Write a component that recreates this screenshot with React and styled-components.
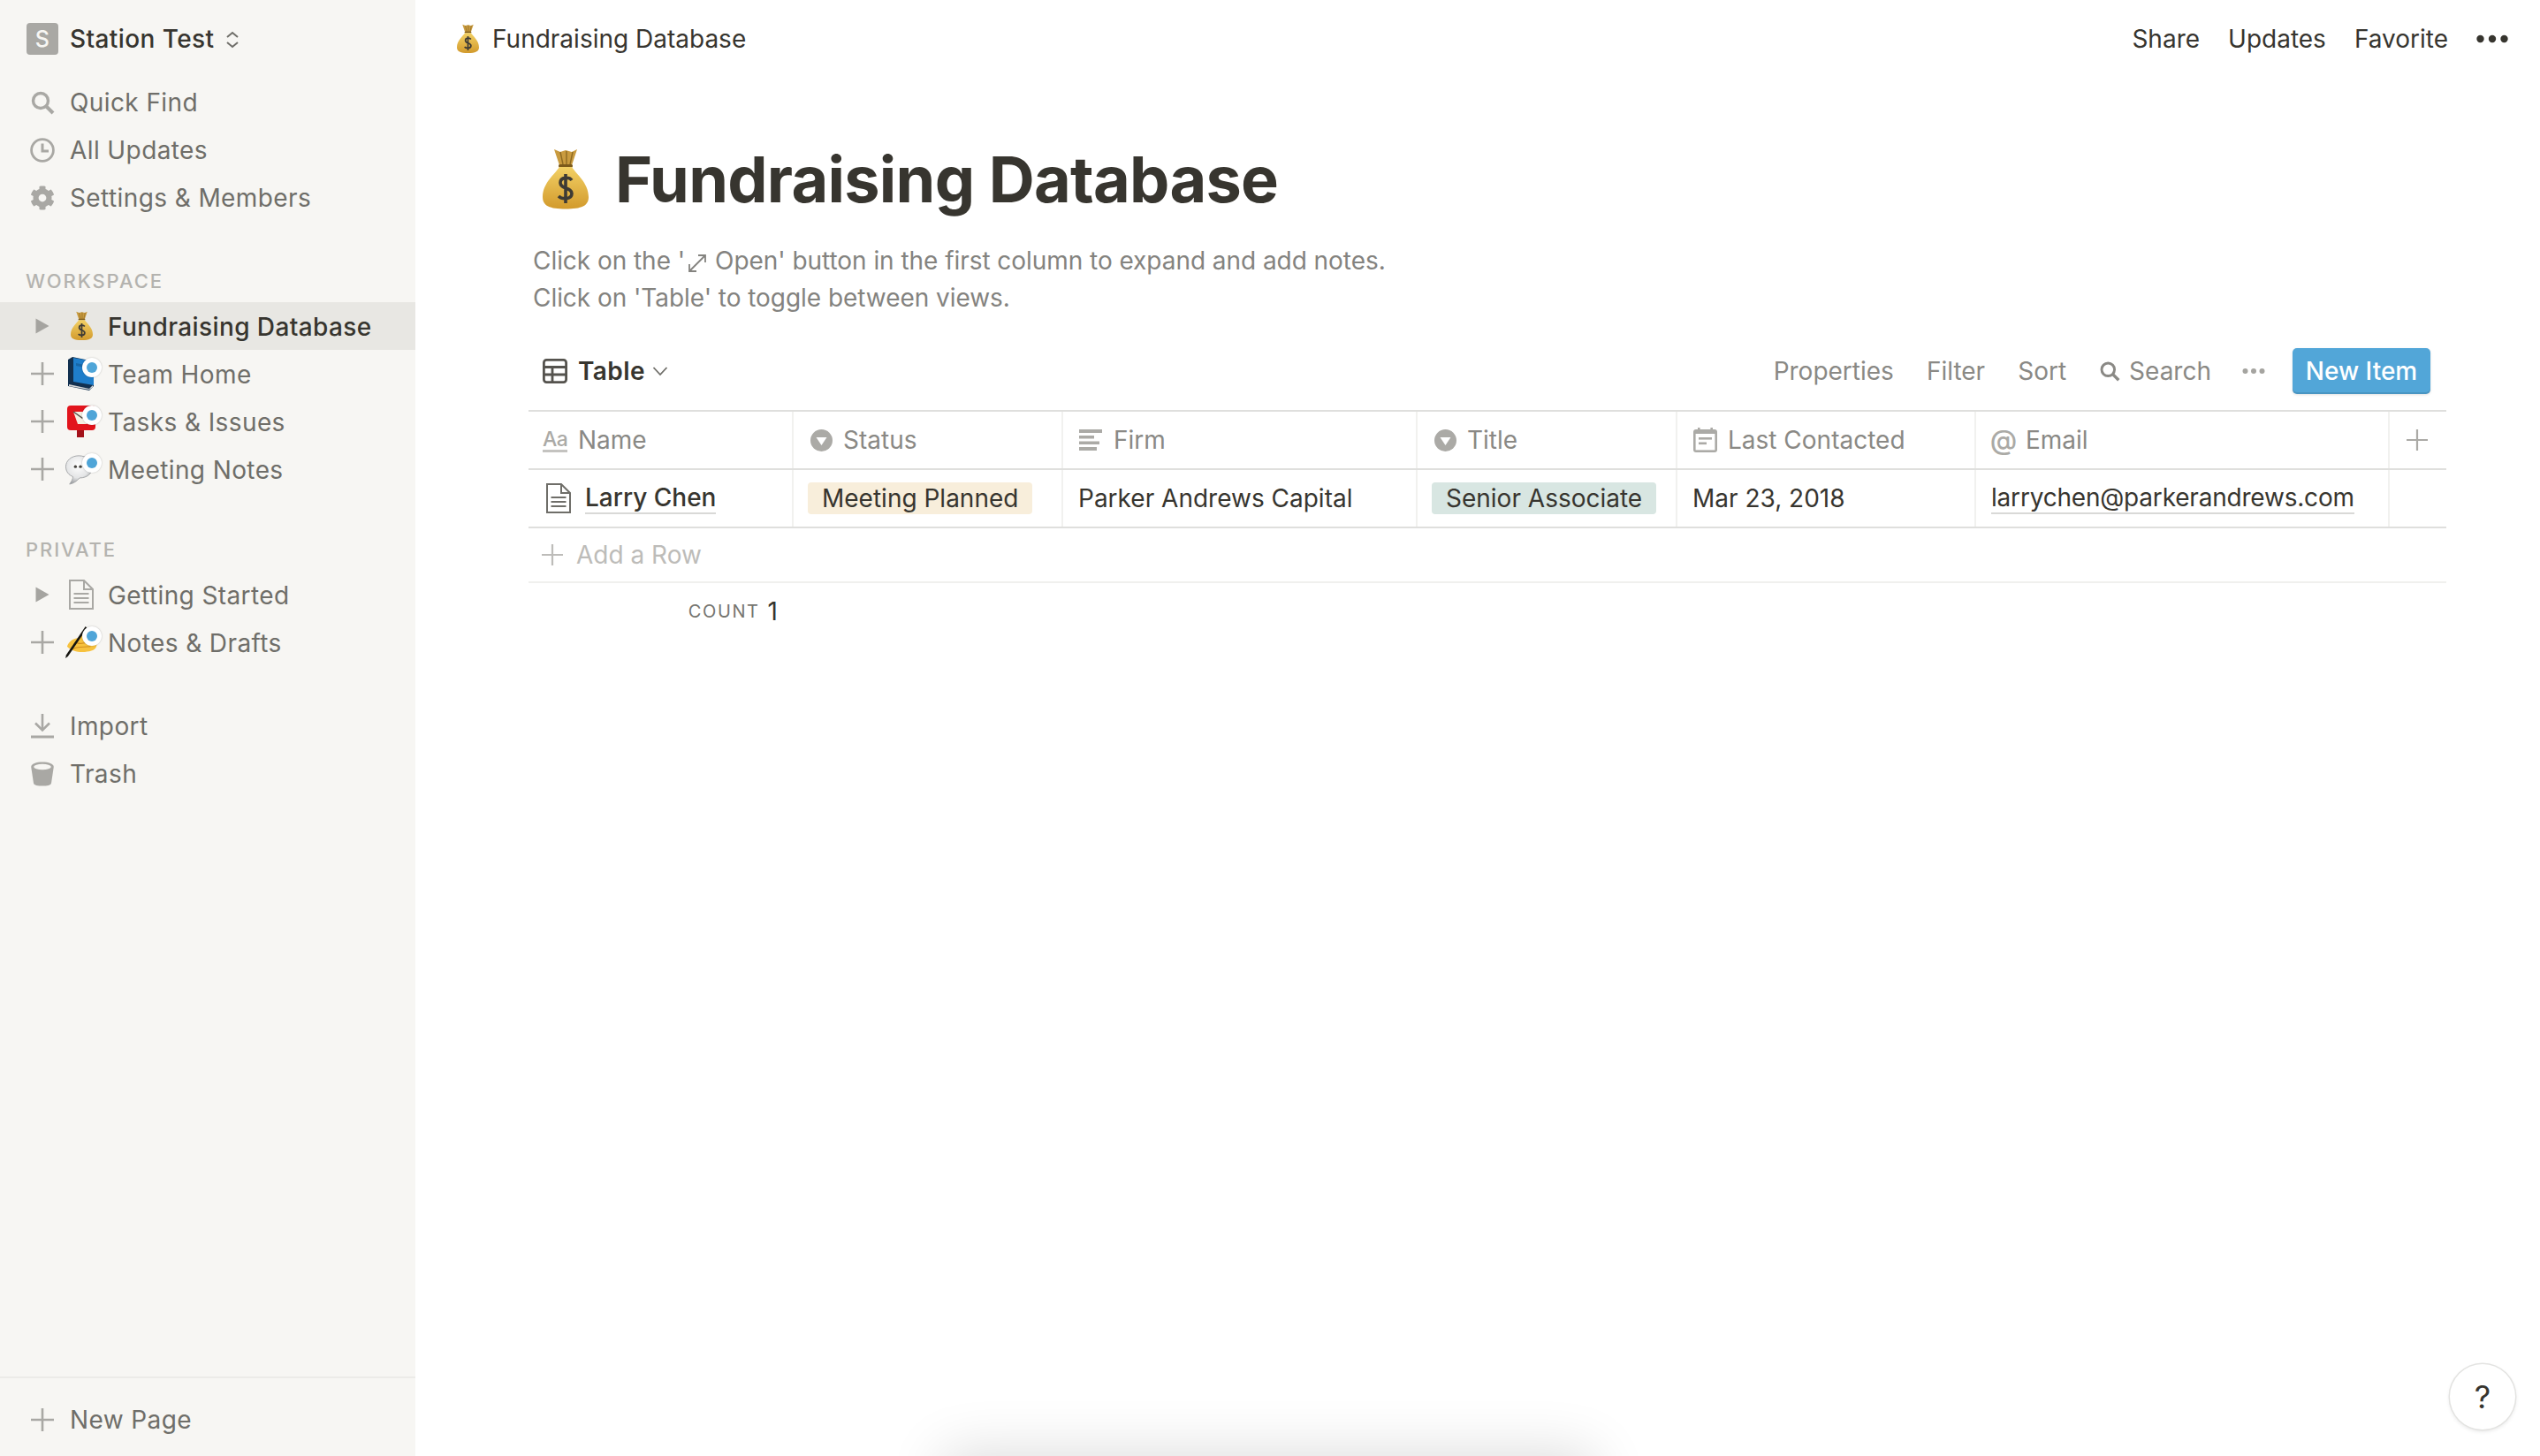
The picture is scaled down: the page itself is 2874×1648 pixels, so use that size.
import React from "react";
import styled, { createGlobalStyle } from "styled-components";
import { FaCog } from "react-icons/fa";

const GlobalStyle = createGlobalStyle`
  html, body {
    margin: 0;
    padding: 0;
    background: #fff;
  }
  body {
    font-family: "Inter", "Liberation Sans", sans-serif;
    color: #37352f;
    -webkit-font-smoothing: antialiased;
  }
  * { box-sizing: border-box; }
`;

const Page = styled.div`
  position: relative;
  display: flex;
  width: 100vw;
  height: 100vh;
  overflow: hidden;
`;

/* sidebar */

const Sidebar = styled.aside`
  display: flex;
  flex-direction: column;
  flex: 0 0 470px;
  background: #f7f6f3;
`;

const Workspace = styled.div`
  display: flex;
  align-items: center;
  height: 88px;
  padding-left: 30px;
  font-size: 28px;
  font-weight: 500;
  letter-spacing: 0.4px;
  color: #37352f;
`;

const Avatar = styled.span`
  display: flex;
  align-items: center;
  justify-content: center;
  width: 36px;
  height: 36px;
  margin-right: 13px;
  border-radius: 4px;
  background: #a9a8a4;
  color: #f7f6f3;
  font-size: 25px;
  font-weight: 500;
`;

const Updown = styled.svg`
  width: 16px;
  height: 20px;
  margin-left: 13px;
  margin-top: 2px;
`;

const NavGroup = styled.nav`
  display: flex;
  flex-direction: column;
  margin-top: ${(p) => p.$top || 0}px;
`;

const Row = styled.div`
  display: flex;
  align-items: center;
  height: 54px;
  padding-left: 30px;
  font-size: 28px;
  letter-spacing: 0.4px;
  font-weight: ${(p) => (p.$active ? 500 : 400)};
  color: ${(p) => (p.$active ? "#37352f" : "#6f6e69")};
  background: ${(p) => (p.$active ? "#e8e7e3" : "transparent")};
`;

const RowLabel = styled.span`
  padding-top: 2px;
`;

const Slot = styled.span`
  position: relative;
  display: flex;
  align-items: center;
  justify-content: center;
  flex: 0 0 36px;
  width: 36px;
  min-width: 0;
  height: 36px;
  margin-right: ${(p) => (p.$second ? 12 : 13)}px;
  margin-left: ${(p) => (p.$second ? -5 : 0)}px;
  padding-top: ${(p) => (p.$nudge ? 2 : 0)}px;
  color: #a9a8a4;
`;

const Badge = styled.span`
  position: absolute;
  top: 0;
  right: -5px;
  width: 22px;
  height: 22px;
  border-radius: 50%;
  background: #fff;
  box-shadow: 0 0 2px rgba(0, 0, 0, 0.25);

  &::after {
    content: "";
    position: absolute;
    top: 5px;
    left: 5px;
    width: 12px;
    height: 12px;
    border-radius: 50%;
    background: #4fa5d8;
  }
`;

const SectionLabel = styled.div`
  height: 30px;
  margin: ${(p) => p.$top}px 0 9px;
  padding-left: 29px;
  font-size: 22px;
  line-height: 30px;
  font-weight: 500;
  letter-spacing: 1.9px;
  color: #b4b3af;
`;

const SidebarFooter = styled.div`
  margin-top: auto;
  height: 90px;
  padding-top: 19px;
  border-top: 2px solid #ecebe8;
`;

/* main */

const Main = styled.main`
  display: flex;
  flex-direction: column;
  flex: 1;
  min-width: 0;
`;

const Topbar = styled.header`
  display: flex;
  align-items: center;
  height: 88px;
  padding: 0 36px 0 47px;
  font-size: 28px;
  color: #37352f;
`;

const Crumb = styled.div`
  display: flex;
  align-items: center;
  gap: 15px;
`;

const TopActions = styled.div`
  display: flex;
  align-items: center;
  gap: 32px;
  margin-left: auto;
`;

const Dots = styled.svg`
  display: block;
  width: ${(p) => p.width}px;
  height: ${(p) => p.height}px;
`;

const Content = styled.div`
  display: flex;
  flex-direction: column;
  margin: 0 106px 0 128px;
`;

const TitleRow = styled.div`
  display: flex;
  align-items: center;
  gap: 30px;
  height: 90px;
  margin: 70px 0 0 16px;
`;

const Title = styled.h1`
  margin: 0;
  font-size: 72px;
  line-height: 90px;
  font-weight: 700;
  letter-spacing: -0.75px;
  color: #37352f;
`;

const Description = styled.div`
  margin: 26px 0 0 5px;
  font-size: 28px;
  line-height: 42px;
  letter-spacing: -0.05px;
  color: #84837f;

  svg {
    display: inline-block;
    width: 24px;
    height: 24px;
    vertical-align: -5px;
    margin: 0 8px 0 2px;
  }
`;

const Toolbar = styled.div`
  display: flex;
  align-items: center;
  height: 52px;
  margin-top: 36px;
  padding: 0 18px 0 16px;
`;

const ViewSwitch = styled.div`
  display: flex;
  align-items: center;
  gap: 12px;
  font-size: 28px;
  font-weight: 600;
  letter-spacing: 0.4px;
  color: #37352f;
`;

const Chevron = styled.svg`
  width: 18px;
  height: 12px;
  margin-left: -4px;
`;

const Tools = styled.div`
  display: flex;
  align-items: center;
  gap: 37px;
  margin-left: auto;
  font-size: 28px;
  color: #8a8985;
`;

const SearchTool = styled.span`
  display: flex;
  align-items: center;
  gap: 10px;
  margin-right: -2px;
`;

const NewItem = styled.button`
  height: 52px;
  width: 156px;
  margin-left: -6px;
  padding: 0;
  border: 0;
  border-radius: 5px;
  background: #52a6d8;
  box-shadow: inset 0 -2px 0 rgba(0, 0, 0, 0.1), 0 1px 3px rgba(0, 0, 0, 0.12);
  color: #fff;
  font-family: inherit;
  font-size: 28px;
  font-weight: 500;
`;

const Table = styled.div`
  margin-top: 18px;
  border-top: 2px solid #dfdfdd;
`;

const columns = [300, 305, 401, 294, 338, 468, 64];

const TableRow = styled.div`
  display: grid;
  grid-template-columns: ${columns.map((c) => `${c}px`).join(" ")};
  height: ${(p) => p.$height}px;
  border-bottom: 2px solid #dfdfdd;
`;

const Cell = styled.div`
  display: flex;
  align-items: center;
  min-width: 0;
  padding-left: ${(p) => p.$pad ?? 17}px;
  border-right: 2px solid #f1f1ef;
  font-size: 28px;
  white-space: nowrap;
  color: ${(p) => (p.$head ? "#8a8985" : "#37352f")};
  &:last-child { border-right: 0; }
`;

const HeadIcon = styled.span`
  display: flex;
  align-items: center;
  justify-content: center;
  flex: 0 0 auto;
  width: 28px;
  margin-right: ${(p) => p.$gap ?? 12}px;
  color: #abaaa6;
`;

const AaGlyph = styled.span`
  display: block;
  width: 28px;
  font-size: 23px;
  line-height: 24px;
  font-weight: 500;
  letter-spacing: -0.5px;
  text-align: center;
  border-bottom: 3px solid #c4c3c0;
`;

const AtGlyph = styled.span`
  font-size: 31px;
  line-height: 30px;
  font-weight: 500;
`;

const Linked = styled.span`
  font-weight: ${(p) => (p.$strong ? 500 : 400)};
  letter-spacing: ${(p) => (p.$strong ? 0 : -0.2)}px;
  line-height: 34px;
  border-bottom: 2px solid #d9d9d7;
`;

const Pill = styled.span`
  display: flex;
  align-items: center;
  height: 36px;
  padding: 0 16px;
  border-radius: 4px;
  background: ${(p) => p.$bg};
  color: #37352f;
`;

const AddRow = styled.div`
  display: flex;
  align-items: center;
  gap: 15px;
  height: 62px;
  padding-left: 15px;
  border-bottom: 2px solid #f0f0ee;
  font-size: 28px;
  color: #bdbcb9;
`;

const CountRow = styled.div`
  display: flex;
  align-items: center;
  justify-content: flex-end;
  gap: 9px;
  width: 282px;
  height: 64px;
`;

const CountLabel = styled.span`
  font-size: 20px;
  letter-spacing: 1.6px;
  color: #76756f;
`;

const CountValue = styled.span`
  font-size: 28px;
  color: #37352f;
`;

const HelpButton = styled.div`
  position: absolute;
  right: 28px;
  bottom: 30px;
  display: flex;
  align-items: center;
  justify-content: center;
  width: 74px;
  height: 74px;
  border-radius: 50%;
  background: #fff;
  box-shadow: 0 0 0 1.5px #e3e3e1, 0 2px 5px rgba(0, 0, 0, 0.12);
  font-size: 36px;
  font-weight: 400;
  color: #37352f;
`;

const OffscreenToast = styled.div`
  position: absolute;
  left: 1075px;
  top: 1652px;
  width: 720px;
  height: 60px;
  box-shadow: 0 0 64px 8px rgba(0, 0, 0, 0.14);
`;

/* drawings */

const SearchIcon = ({ size = 28 }) => (
  <svg width={size} height={size} viewBox="0 0 28 28" fill="none" stroke="currentColor">
    <circle cx="12" cy="12" r="8.5" strokeWidth="3.4" />
    <path d="M18.5 18.5L26 26" strokeWidth="4" />
  </svg>
);

const ClockIcon = () => (
  <svg width="28" height="28" viewBox="0 0 28 28" fill="none" stroke="currentColor">
    <circle cx="14" cy="14" r="12.4" strokeWidth="2.8" />
    <path d="M14 6.5V15H21" strokeWidth="3" />
  </svg>
);

const PlusIcon = ({ size = 26, width = 2.6 }) => (
  <svg width={size} height={size} viewBox="0 0 26 26" stroke="currentColor" strokeWidth={width}>
    <path d="M13 0V26M0 13H26" />
  </svg>
);

const Caret = () => (
  <svg width="16" height="18" viewBox="0 0 16 18" fill="#a5a4a0">
    <path d="M0.5 0.5L15.5 9L0.5 17.5Z" />
  </svg>
);

const ImportIcon = () => (
  <svg width="26" height="28" viewBox="0 0 26 28" fill="none" stroke="currentColor">
    <path d="M13 0V17" strokeWidth="2.6" />
    <path d="M5 10.5L13 18.5L21 10.5" strokeWidth="2.6" />
    <path d="M0 26H26" strokeWidth="3" />
  </svg>
);

const TrashIcon = () => (
  <svg width="26" height="28" viewBox="0 0 26 28" fill="currentColor">
    <path d="M0.2 6C0.2 2.5 6 0.5 13 0.5S25.8 2.5 25.8 6L23 24.5C22.6 26.8 18 27.6 13 27.6S3.4 26.8 3 24.5Z" />
    <ellipse cx="13" cy="6" rx="9.8" ry="3.2" fill="#f7f6f3" />
  </svg>
);

const DocIcon = ({ width = 28, height = 34, color = "#a9a8a4", paper = "transparent" }) => (
  <svg width={width} height={height} viewBox="0 0 28 34" fill={paper} stroke={color}>
    <path d="M1 1H17L27 11V33H1Z" strokeWidth="2" />
    <path d="M17 1V11H27" strokeWidth="2" />
    <path d="M5.5 16H22.5M5.5 21H22.5M5.5 26H22.5" strokeWidth="2" />
  </svg>
);

const SelectIcon = ({ size = 25 }) => (
  <svg width={size} height={size} viewBox="0 0 25 25">
    <circle cx="12.5" cy="12.5" r="12.5" fill="#abaaa6" />
    <path d="M6.5 9H18.5L12.5 18Z" fill="#fff" />
  </svg>
);

const TextIcon = () => (
  <svg width="26" height="24" viewBox="0 0 26 24" fill="#abaaa6">
    <rect x="0" y="0" width="26" height="4" />
    <rect x="0" y="7" width="17" height="3.5" />
    <rect x="0" y="13.5" width="23" height="3.5" />
    <rect x="0" y="20" width="20" height="4" />
  </svg>
);

const CalendarIcon = () => (
  <svg width="27" height="28" viewBox="0 0 27 28">
    <path d="M3 2H24Q27 2 27 5V25Q27 28 24 28H3Q0 28 0 25V5Q0 2 3 2Z" fill="#abaaa6" />
    <rect x="5" y="0" width="2.6" height="4" fill="#abaaa6" />
    <rect x="19.4" y="0" width="2.6" height="4" fill="#abaaa6" />
    <rect x="2.6" y="7" width="21.8" height="18.4" fill="#fff" />
    <rect x="6" y="11" width="15" height="2.6" fill="#abaaa6" />
    <rect x="6" y="16.5" width="9" height="2.6" fill="#abaaa6" />
  </svg>
);

const TableIcon = () => (
  <svg width="28" height="28" viewBox="0 0 28 28" fill="none" stroke="#55534e" strokeWidth="2.8">
    <rect x="1.4" y="1.4" width="25.2" height="25.2" rx="3" />
    <path d="M1.3 9.5H26.7M1.3 18H26.7M11 9.5V26.7" />
  </svg>
);

const OpenArrow = () => (
  <svg viewBox="0 0 24 24" fill="none" stroke="#84837f" strokeWidth="1.8">
    <path d="M3 21L21 3M13 3H21V11M3 13V21H11" />
  </svg>
);

const MoneyBag = ({ width = 25, height = 34 }) => (
  <svg width={width} height={height} viewBox="0 0 52 68">
    <defs>
      <linearGradient id="bagFill" x1="0" y1="0" x2="0" y2="1">
        <stop offset="0" stopColor="#f2d065" />
        <stop offset="1" stopColor="#d29a2c" />
      </linearGradient>
    </defs>
    <path d="M13 0L20 3L26 1L33 3L39 0L33 18H19Z" fill="#c99b3f" />
    <path d="M20 3L23 17M27 2L27 17M34 3L31 17" stroke="#8e6a22" strokeWidth="1.4" fill="none" />
    <rect x="18" y="17" width="16" height="3.5" rx="1.5" fill="#7c5a1b" />
    <path d="M19 20H33C38 28 52 38 52 54C52 64 44 67.5 26 67.5S0 64 0 54C0 38 14 28 19 20Z" fill="url(#bagFill)" />
    <path d="M33 35C30 31 20 31 20 38C20 45 33 43 33 50C33 57 22 57 18 53M26 28V61" fill="none" stroke="#3d3a35" strokeWidth="3.6" />
  </svg>
);

const BookEmoji = () => (
  <svg width="32" height="38" viewBox="0 0 32 38">
    <path d="M1 3L6 0L30 5V33L25 38L1 33Z" fill="#12304f" />
    <path d="M7 1L30 5V32L7 28Z" fill="#1f7ecb" />
    <path d="M2 31L25 36L29 32V34L25 37L2 33Z" fill="#d9d9d9" />
    <path d="M10 7L20 9V12L10 10Z" fill="#1767a8" />
  </svg>
);

const MailboxEmoji = () => (
  <svg width="32" height="36" viewBox="0 0 32 36">
    <rect x="11" y="26" width="8" height="10" fill="#a3121a" />
    <path d="M4 0H28Q32 0 32 4V24Q32 28 28 28H4Q0 28 0 24V4Q0 0 4 0Z" fill="#e2141c" />
    <path d="M7 7H27L22 21H12Z" fill="#f5efe2" />
    <path d="M7 7L17 14L27 7" fill="none" stroke="#55504a" strokeWidth="1.5" />
  </svg>
);

const BubbleEmoji = () => (
  <svg width="38" height="38" viewBox="0 0 38 38">
    <defs>
      <radialGradient id="bubbleFill" cx="0.45" cy="0.35" r="0.65">
        <stop offset="0" stopColor="#ffffff" />
        <stop offset="0.65" stopColor="#e4e5e6" />
        <stop offset="1" stopColor="#9a9da0" />
      </radialGradient>
    </defs>
    <ellipse cx="26" cy="13" rx="12" ry="10" fill="#b9bbbd" />
    <path d="M16 3C7 3 0.5 9 0.5 16C0.5 22 4 26 9 28C9 31 7 34 5 37C10 36 14 33 17 29.5C26 29.5 32.5 24 32.5 16C32.5 9 25 3 16 3Z" fill="url(#bubbleFill)" stroke="#a4a6a8" strokeWidth="1" />
    <circle cx="12" cy="16" r="1.8" fill="#45433e" />
    <circle cx="18" cy="16" r="1.8" fill="#45433e" />
  </svg>
);

const WritingEmoji = () => (
  <svg width="38" height="38" viewBox="0 0 38 38">
    <path d="M2 24C4 18 10 14 15 14L24 8C28 10 37 14 37.5 19C38 24 36 28 31 29C22 32 8 31 2 24Z" fill="#f7c23e" />
    <path d="M8 27C14 24 22 25 30 24M14 20C18 21 24 20 28 18" fill="none" stroke="#d3901f" strokeWidth="1.3" />
    <path d="M24 0L26 2L3 36L0 38L1 34Z" fill="#15140f" />
  </svg>
);

const nav = [
  { label: "Quick Find", icon: <SearchIcon size={28} /> },
  { label: "All Updates", icon: <ClockIcon /> },
  { label: "Settings & Members", icon: <FaCog size={28} /> },
];

const workspacePages = [
  { label: "Fundraising Database", emoji: <MoneyBag />, active: true, caret: true },
  { label: "Team Home", emoji: <BookEmoji />, badge: true },
  { label: "Tasks & Issues", emoji: <MailboxEmoji />, badge: true },
  { label: "Meeting Notes", emoji: <BubbleEmoji />, badge: true },
];

const privatePages = [
  { label: "Getting Started", emoji: <DocIcon />, caret: true },
  { label: "Notes & Drafts", emoji: <WritingEmoji />, badge: true },
];

const headers = [
  { label: "Name", icon: <AaGlyph>Aa</AaGlyph>, pad: 16 },
  { label: "Status", icon: <SelectIcon />, gap: 11 },
  { label: "Firm", icon: <TextIcon /> },
  { label: "Title", icon: <SelectIcon />, gap: 11 },
  { label: "Last Contacted", icon: <CalendarIcon /> },
  { label: "Email", icon: <AtGlyph>@</AtGlyph>, gap: 11 },
];

const PageRow = ({ page }) => (
  <Row $active={page.active}>
    <Slot>{page.caret ? <Caret /> : <PlusIcon />}</Slot>
    <Slot $second>
      {page.emoji}
      {page.badge && <Badge />}
    </Slot>
    <RowLabel>{page.label}</RowLabel>
  </Row>
);

const NavRow = ({ icon, label }) => (
  <Row>
    <Slot $nudge>{icon}</Slot>
    <RowLabel>{label}</RowLabel>
  </Row>
);

const App = () => {
  return (
    <Page>
      <GlobalStyle />
      <Sidebar>
        <Workspace>
          <Avatar>S</Avatar>
          Station Test
          <Updown viewBox="0 0 16 20" fill="none" stroke="#6f6e69" strokeWidth="2">
            <path d="M2 7L8 2L14 7M2 13L8 18L14 13" />
          </Updown>
        </Workspace>

        <NavGroup>
          {nav.map((item) => (
            <NavRow key={item.label} {...item} />
          ))}
        </NavGroup>

        <SectionLabel $top={53}>WORKSPACE</SectionLabel>
        <NavGroup>
          {workspacePages.map((page) => (
            <PageRow key={page.label} page={page} />
          ))}
        </NavGroup>

        <SectionLabel $top={49}>PRIVATE</SectionLabel>
        <NavGroup>
          {privatePages.map((page) => (
            <PageRow key={page.label} page={page} />
          ))}
        </NavGroup>

        <NavGroup $top={40}>
          <NavRow icon={<ImportIcon />} label="Import" />
          <NavRow icon={<TrashIcon />} label="Trash" />
        </NavGroup>

        <SidebarFooter>
          <NavRow icon={<PlusIcon />} label="New Page" />
        </SidebarFooter>
      </Sidebar>

      <Main>
        <Topbar>
          <Crumb>
            <MoneyBag />
            Fundraising Database
          </Crumb>
          <TopActions>
            <span>Share</span>
            <span>Updates</span>
            <span>Favorite</span>
            <Dots width={36} height={10} viewBox="0 0 36 10" fill="#37352f">
              <circle cx="4.5" cy="5" r="4.2" />
              <circle cx="18" cy="5" r="4.2" />
              <circle cx="31.5" cy="5" r="4.2" />
            </Dots>
          </TopActions>
        </Topbar>

        <Content>
          <TitleRow>
            <MoneyBag width={52} height={68} />
            <Title>Fundraising Database</Title>
          </TitleRow>

          <Description>
            Click on the '<OpenArrow />Open' button in the first column to expand and add notes.
            <br />
            Click on 'Table' to toggle between views.
          </Description>

          <Toolbar>
            <ViewSwitch>
              <TableIcon />
              Table
              <Chevron viewBox="0 0 18 12" fill="none" stroke="#6f6e69" strokeWidth="1.8">
                <path d="M1.5 2L9 10L16.5 2" />
              </Chevron>
            </ViewSwitch>
            <Tools>
              <span>Properties</span>
              <span>Filter</span>
              <span>Sort</span>
              <SearchTool>
                <SearchIcon size={24} />
                Search
              </SearchTool>
              <Dots width={26} height={8} viewBox="0 0 26 8" fill="#a5a4a0">
                <circle cx="3.5" cy="4" r="3" />
                <circle cx="13" cy="4" r="3" />
                <circle cx="22.5" cy="4" r="3" />
              </Dots>
              <NewItem>New Item</NewItem>
            </Tools>
          </Toolbar>

          <Table>
            <TableRow $height={66}>
              {headers.map((head) => (
                <Cell key={head.label} $head $pad={head.pad}>
                  <HeadIcon $gap={head.gap}>{head.icon}</HeadIcon>
                  {head.label}
                </Cell>
              ))}
              <Cell $head $pad={17}>
                <HeadIcon>
                  <PlusIcon size={24} width={2.4} />
                </HeadIcon>
              </Cell>
            </TableRow>

            <TableRow $height={66}>
              <Cell $pad={20}>
                <HeadIcon $gap={16}>
                  <DocIcon color="#6f6e69" />
                </HeadIcon>
                <Linked $strong>Larry Chen</Linked>
              </Cell>
              <Cell $pad={16}>
                <Pill $bg="#f8eedb">Meeting Planned</Pill>
              </Cell>
              <Cell>Parker Andrews Capital</Cell>
              <Cell $pad={16}>
                <Pill $bg="#d8e6e2">Senior Associate</Pill>
              </Cell>
              <Cell>Mar 23, 2018</Cell>
              <Cell>
                <Linked>larrychen@parkerandrews.com</Linked>
              </Cell>
              <Cell />
            </TableRow>

            <AddRow>
              <PlusIcon size={24} width={2.4} />
              Add a Row
            </AddRow>

            <CountRow>
              <CountLabel>COUNT</CountLabel>
              <CountValue>1</CountValue>
            </CountRow>
          </Table>
        </Content>
      </Main>

      <OffscreenToast />
      <HelpButton>?</HelpButton>
    </Page>
  );
};

export default App;
